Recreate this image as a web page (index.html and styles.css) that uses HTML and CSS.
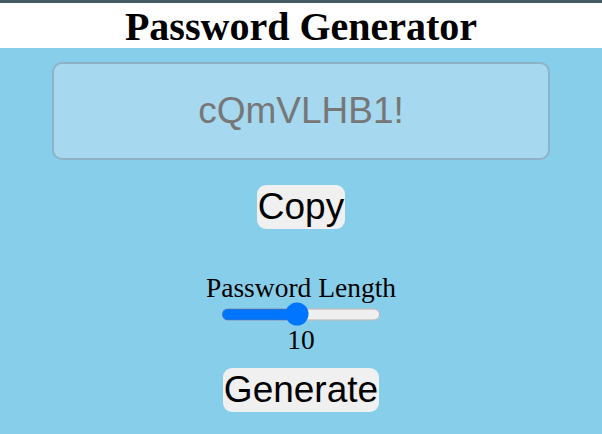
FILE: index.html
```html
<!DOCTYPE html>
<html>
<head>
<meta charset="utf-8">
<link rel="stylesheet" href="styles.css">
</head>
<body>
<div class="topbar"></div>
<header class="header"><h1 class="title">Password Generator</h1></header>
<main class="main">
  <div class="output">cQmVLHB1!</div>
  <button class="btn copy">Copy</button>
  <div class="length">
    <label class="label" for="len">Password Length</label>
    <input class="slider" id="len" type="range" min="1" max="20" value="10">
    <div class="value">10</div>
  </div>
  <button class="btn generate">Generate</button>
</main>
</body>
</html>
```
FILE: styles.css
```css
html, body { margin: 0; padding: 0; }
body { background: #87ceeb; font-family: "Liberation Serif", serif; height: 434px; overflow: hidden; }
.topbar { height: 3px; background: #465a66; }
.header { background: #fff; height: 45px; display: flex; justify-content: center; align-items: center; }
.title { margin: 0; font-size: 40px; font-weight: bold; line-height: 1; color: #000; padding-top: 2px; }
.main { display: flex; flex-direction: column; align-items: center; padding-top: 14px; }
.output {
  box-sizing: border-box; width: 498px; height: 98px;
  border: 2px solid #8eb3c6; border-radius: 10px;
  background: #a6d8ef; color: #777;
  font-family: "Liberation Sans", Arial, sans-serif; font-size: 37px;
  display: flex; align-items: center; justify-content: center;
}
.btn {
  font-family: "Liberation Sans", Arial, sans-serif; font-size: 37px; color: #000;
  background: #f0f0f0; border: none; border-radius: 9px; padding: 0 1px; line-height: 44px; height: 44px;
}
.copy { margin-top: 25px; }
.length { display: flex; flex-direction: column; align-items: center; margin-top: 45px; }
.label { font-size: 27.5px; line-height: 28px; }
.slider { width: 107px; margin: 1px 0 0; height: 14px; zoom: 1.5; }
.value { font-size: 27.5px; line-height: 28px; margin-top: 1px; }
.generate { margin-top: 14px; }
```
